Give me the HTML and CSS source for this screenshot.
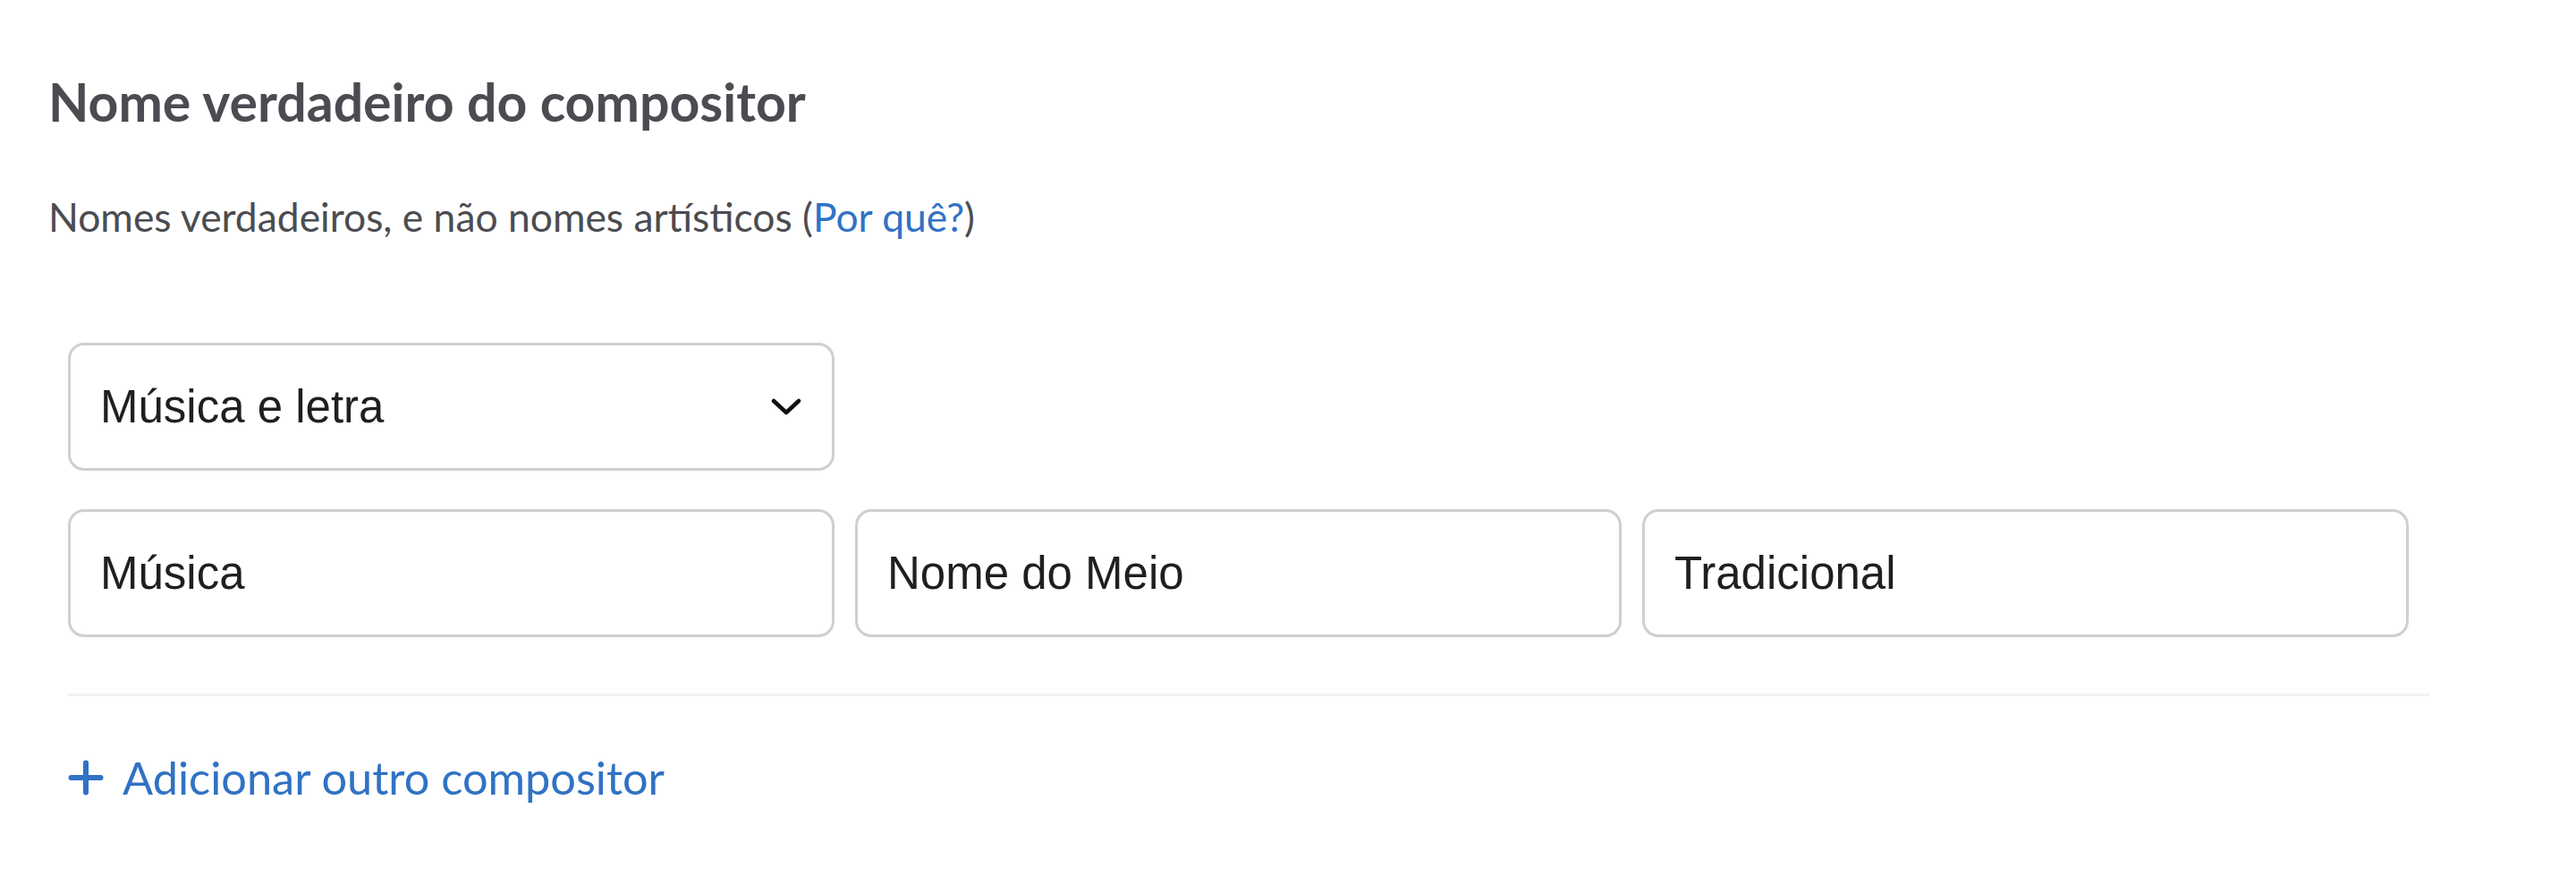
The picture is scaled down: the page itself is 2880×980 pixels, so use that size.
FILE: index.html
```html
<!DOCTYPE html>
<html lang="pt">
<head>
<meta charset="utf-8">
<title>Nome verdadeiro do compositor</title>
<link rel="stylesheet" href="styles.css">
</head>
<body>
<main class="composer">
  <h2 class="title">Nome verdadeiro do compositor</h2>
  <p class="hint">Nomes verdadeiros, e não nomes artísticos (<a class="hint-link" href="#">Por quê?</a>)</p>
  <div class="entry">
    <div class="role-row">
      <div class="field select">
        <span class="field-text">Música e letra</span>
        <svg class="chevron" viewBox="0 0 34 20" width="34" height="20" aria-hidden="true">
          <path d="M3 3 L17 16 L31 3" fill="none" stroke="#111" stroke-width="4.5" stroke-linecap="round" stroke-linejoin="round"/>
        </svg>
      </div>
    </div>
    <div class="name-row">
      <div class="field"><span class="field-text">Música</span></div>
      <div class="field"><span class="field-text">Nome do Meio</span></div>
      <div class="field"><span class="field-text">Tradicional</span></div>
    </div>
  </div>
  <div class="divider"></div>
  <a class="add" href="#">
    <svg class="plus" viewBox="0 0 40 40" width="40" height="40" aria-hidden="true">
      <path d="M20 3.5 V36.5 M3.5 20 H36.5" fill="none" stroke="#3072c4" stroke-width="6" stroke-linecap="round"/>
    </svg>
    <span>Adicionar outro compositor</span>
  </a>
</main>
</body>
</html>
```
FILE: styles.css
```css
html, body {
  margin: 0;
  padding: 0;
  background: #ffffff;
}

.composer {
  padding: 79px 0 0 54px;
  font-family: Lato, "Noto Sans", sans-serif;
}

.title {
  margin: 0;
  font-size: 59px;
  line-height: 1.2;
  font-weight: 700;
  color: #4b4c51;
}

.hint {
  margin: 65px 0 0;
  font-size: 44.4px;
  line-height: 1.2;
  font-weight: 400;
  color: #4b4c51;
}

.hint-link {
  color: #3072c4;
  text-decoration: none;
}

.entry {
  margin: 115px 0 0 22px;
  width: 2640px;
}

.role-row {
  display: grid;
  grid-template-columns: 857px;
}

.name-row {
  margin-top: 43px;
  display: grid;
  grid-template-columns: repeat(3, 857px);
  column-gap: 23px;
}

.field {
  box-sizing: border-box;
  height: 143px;
  border: 3px solid #cfcfcf;
  border-radius: 18px;
  background: #ffffff;
  display: flex;
  align-items: center;
  padding: 0 34px 0 33px;
  font-family: "Liberation Sans", Arial, sans-serif;
  font-size: 51px;
  color: #1f1f1f;
}

.select {
  justify-content: space-between;
}

.field-text {
  line-height: 1;
}

.chevron {
  display: block;
  flex: none;
}

.divider {
  margin: 63px 0 0 22px;
  width: 2640px;
  height: 3px;
  background: #f1f2f4;
}

.add {
  margin: 61px 0 0 22px;
  display: inline-flex;
  align-items: center;
  gap: 21px;
  font-size: 50.5px;
  line-height: 1.2;
  color: #3072c4;
  text-decoration: none;
}

.plus {
  display: block;
  flex: none;
}
```
